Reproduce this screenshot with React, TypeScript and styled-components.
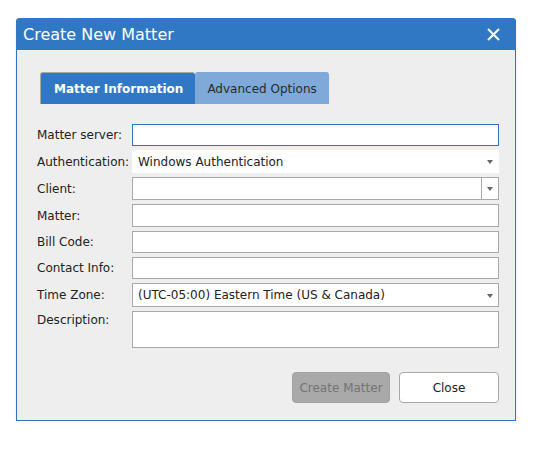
import {createGlobalStyle, styled} from 'styled-components';

const GlobalStyle = createGlobalStyle`
    html, body {
        margin: 0;
        padding: 0;
        background: #ffffff;
    }
    body {
        font-family: "DejaVu Sans", Verdana, sans-serif;
        font-size: 12px;
        color: #222222;
    }
`;

const Page = styled.div`
    padding: 18px 0 0 16px;
`;

const Dialog = styled.div`
    width: 498px;
    border: 1px solid #2f74c0;
    border-top: none;
    background: #eeeeee;
    border-radius: 4px 4px 0 0;
    box-shadow: 0 1px 1px rgba(0, 0, 0, 0.35);
`;

const Header = styled.div`
    height: 32px;
    display: flex;
    align-items: center;
    justify-content: space-between;
    background: #3178c4;
    color: #ffffff;
    padding: 0 16px 0 7px;
    margin: 0 -1px;
    border-radius: 4px 4px 0 0;
`;

const Title = styled.div`
    font-size: 16px;
`;

const CloseIcon = styled.svg`
    width: 13px;
    height: 13px;
    display: block;
`;

const Body = styled.div`
    padding: 22px 16px 17px 20px;
`;

const Tabs = styled.div`
    display: flex;
    margin-left: 3px;
    margin-bottom: 20px;
`;

const Tab = styled.div<{$active?: boolean}>`
    height: 32px;
    box-sizing: border-box;
    display: flex;
    align-items: center;
    white-space: nowrap;
    padding: ${(p) => (p.$active ? '0 12px 0 13px' : '0 12px 0 12px')};
    border-radius: 3px 3px 0 0;
    background: ${(p) => (p.$active ? '#3178c4' : '#7ea9d8')};
    color: ${(p) => (p.$active ? '#ffffff' : '#2a2a2a')};
    font-weight: ${(p) => (p.$active ? 'bold' : 'normal')};
    border-top: 1px solid ${(p) => (p.$active ? '#a8a8a8' : '#7ea9d8')};
    border-left: ${(p) => (p.$active ? '1px solid #a8a8a8' : 'none')};
`;

const Form = styled.div`
    display: grid;
    grid-template-columns: 95px 1fr;
    row-gap: 4px;
`;

const Label = styled.div<{$top?: boolean}>`
    display: flex;
    align-items: ${(p) => (p.$top ? 'flex-start' : 'center')};
    padding-top: ${(p) => (p.$top ? '2px' : '0')};
    white-space: nowrap;
`;

const Input = styled.div<{$h: number; $focus?: boolean}>`
    height: ${(p) => p.$h}px;
    box-sizing: border-box;
    background: #ffffff;
    border: 1px solid ${(p) => (p.$focus ? '#2f74c0' : '#a9a9a9')};
`;

const Select = styled.div<{$h: number; $bordered?: boolean}>`
    height: ${(p) => p.$h}px;
    box-sizing: border-box;
    background: #ffffff;
    border: 1px solid ${(p) => (p.$bordered ? '#a9a9a9' : '#ffffff')};
    display: flex;
    align-items: center;
    padding-left: 5px;
`;

const SelectText = styled.div`
    flex: 1;
    white-space: nowrap;
`;

const Combo = styled.div`
    height: 23px;
    box-sizing: border-box;
    background: #ffffff;
    border: 1px solid #a9a9a9;
    display: flex;
`;

const ComboField = styled.div`
    flex: 1;
    border-right: 1px solid #a9a9a9;
`;

const Arrow = styled.div`
    width: 16px;
    display: flex;
    align-items: center;
    justify-content: center;
    &::after {
        content: '';
        border-left: 3.5px solid transparent;
        border-right: 3.5px solid transparent;
        border-top: 4px solid #666666;
        margin-top: 1px;
    }
`;

const Buttons = styled.div`
    display: flex;
    justify-content: flex-end;
    gap: 9px;
    margin-top: 24px;
`;

const Button = styled.div<{$disabled?: boolean}>`
    height: 31px;
    box-sizing: border-box;
    display: flex;
    align-items: center;
    justify-content: center;
    border-radius: 4px;
    width: ${(p) => (p.$disabled ? '98px' : '100px')};
    background: ${(p) => (p.$disabled ? '#a9a9a9' : '#ffffff')};
    color: ${(p) => (p.$disabled ? '#747474' : '#222222')};
    border: 1px solid ${(p) => (p.$disabled ? '#a2a2a2' : '#a9a9a9')};
`;

const App = () => {
    return (
        <>
            <GlobalStyle />
            <Page>
                <Dialog>
                    <Header>
                        <Title>Create New Matter</Title>
                        <CloseIcon viewBox="0 0 13 13">
                            <path
                                d="M1 1 L12 12 M12 1 L1 12"
                                stroke="#ffffff"
                                strokeWidth="2"
                                fill="none"
                            />
                        </CloseIcon>
                    </Header>
                    <Body>
                        <Tabs>
                            <Tab $active>Matter Information</Tab>
                            <Tab>Advanced Options</Tab>
                        </Tabs>
                        <Form>
                            <Label>Matter server:</Label>
                            <Input $h={22} $focus />
                            <Label>Authentication:</Label>
                            <Select $h={23}>
                                <SelectText>Windows Authentication</SelectText>
                                <Arrow />
                            </Select>
                            <Label>Client:</Label>
                            <Combo>
                                <ComboField />
                                <Arrow />
                            </Combo>
                            <Label>Matter:</Label>
                            <Input $h={23} />
                            <Label>Bill Code:</Label>
                            <Input $h={22} />
                            <Label>Contact Info:</Label>
                            <Input $h={22} />
                            <Label>Time Zone:</Label>
                            <Select $h={24} $bordered>
                                <SelectText>
                                    (UTC-05:00) Eastern Time (US &amp; Canada)
                                </SelectText>
                                <Arrow />
                            </Select>
                            <Label $top>Description:</Label>
                            <Input $h={37} />
                        </Form>
                        <Buttons>
                            <Button $disabled>Create Matter</Button>
                            <Button>Close</Button>
                        </Buttons>
                    </Body>
                </Dialog>
            </Page>
        </>
    );
};

export default App;
